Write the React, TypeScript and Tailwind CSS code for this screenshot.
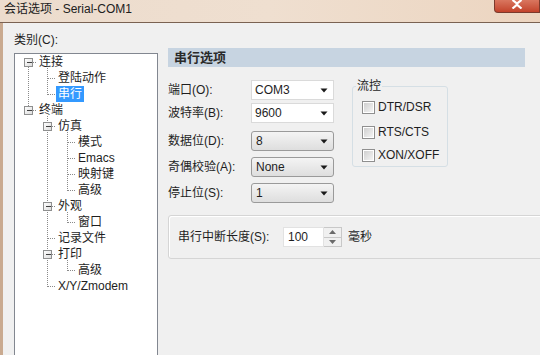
import React from "react";

type Row = { label: string; level: number; box?: boolean; selected?: boolean };

const rows: Row[] = [
  { label: "连接", level: 0, box: true },
  { label: "登陆动作", level: 1 },
  { label: "串行", level: 1, selected: true },
  { label: "终端", level: 0, box: true },
  { label: "仿真", level: 1, box: true },
  { label: "模式", level: 2 },
  { label: "Emacs", level: 2 },
  { label: "映射键", level: 2 },
  { label: "高级", level: 2 },
  { label: "外观", level: 1, box: true },
  { label: "窗口", level: 2 },
  { label: "记录文件", level: 1 },
  { label: "打印", level: 1, box: true },
  { label: "高级", level: 2 },
  { label: "X/Y/Zmodem", level: 1 },
];

const cy = (i: number) => 8 + 16 * i + 0.5;
const X0 = 13.5;
const X1 = 32.5;
const X2 = 52.5;

function TreeLines() {
  const dash = { stroke: "#8a8a8a", strokeWidth: 1, strokeDasharray: "1 1" };
  const v = (x: number, y1: number, y2: number, k: string) => (
    <line key={k} x1={x} y1={y1} x2={x} y2={y2} {...dash} />
  );
  const h = (x1: number, x2: number, y: number, k: string) => (
    <line key={k} x1={x1} y1={y} x2={x2} y2={y} {...dash} />
  );
  const lines: React.ReactNode[] = [];
  lines.push(v(X0, cy(0), cy(3), "v0"));
  lines.push(h(X0, 22, cy(0), "h0"));
  lines.push(h(X0, 22, cy(3), "h3"));
  lines.push(v(X1, cy(0) + 5, cy(2), "v1a"));
  lines.push(h(X1, 41, cy(1), "h1"));
  lines.push(h(X1, 41, cy(2), "h2"));
  lines.push(v(X1, cy(3) + 5, cy(14), "v1b"));
  [4, 9, 11, 12, 14].forEach((r) => lines.push(h(X1, 41, cy(r), "hl" + r)));
  lines.push(v(X2, cy(4) + 5, cy(8), "v2a"));
  lines.push(v(X2, cy(9) + 5, cy(10), "v2b"));
  lines.push(v(X2, cy(12) + 5, cy(13), "v2c"));
  [5, 6, 7, 8, 10, 13].forEach((r) => lines.push(h(X2, 61, cy(r), "h2l" + r)));
  const boxes: React.ReactNode[] = [];
  rows.forEach((r, i) => {
    if (!r.box) return;
    const x = r.level === 0 ? X0 : X1;
    const y = cy(i);
    boxes.push(
      <g key={"b" + i}>
        <rect x={x - 4} y={y - 4} width={8} height={8} fill="url(#boxg)" stroke="#8e8f8f" />
        <line x1={x - 2} y1={y} x2={x + 3} y2={y} stroke="#404040" />
      </g>
    );
  });
  return (
    <svg className="absolute left-0 top-0" width="143" height="300" shapeRendering="crispEdges">
      <defs>
        <linearGradient id="boxg" x1="0" y1="0" x2="1" y2="1">
          <stop offset="0" stopColor="#ffffff" />
          <stop offset="1" stopColor="#dcdcdc" />
        </linearGradient>
      </defs>
      {lines}
      {boxes}
    </svg>
  );
}

function Arrow() {
  return (
    <svg width="8" height="5" viewBox="0 0 8 5">
      <path d="M0.5 0.5 L7.5 0.5 L4 4.5 Z" fill="#1a1a1a" />
    </svg>
  );
}

function FlatCombo({ value }: { value: string }) {
  return (
    <div className="flex h-[20px] w-[83px] items-center justify-between border border-[#dadada] bg-white pl-[32px] pr-[5px]">
      <span className="-ml-[29px]">{value}</span>
      <Arrow />
    </div>
  );
}

function BtnCombo({ value }: { value: string }) {
  return (
    <div className="flex h-[20px] w-[83px] items-center justify-between rounded-[3px] border border-[#9a9a9a] bg-gradient-to-b from-[#f4f4f4] to-[#dedede] pl-[4px] pr-[5px]">
      <span>{value}</span>
      <Arrow />
    </div>
  );
}

function Check({ label }: { label: string }) {
  return (
    <div className="flex items-center gap-[3px]">
      <div className="flex h-[13px] w-[13px] items-center justify-center border border-[#8f8f8f] bg-white">
        <div className="h-[9px] w-[9px] bg-gradient-to-br from-[#d0d0d0] to-[#f4f4f4]" />
      </div>
      <span>{label}</span>
    </div>
  );
}

export default function App() {
  return (
    <div className="relative h-[355px] w-[540px] overflow-hidden bg-[#f0f0f0] font-['Liberation_Sans','Noto_Sans_CJK_SC',sans-serif] text-[12px] leading-[16px] text-[#1e1e1e]">
      {/* title bar */}
      <div className="flex h-[23px] items-start justify-between border-b border-[#7a6252] bg-gradient-to-r from-[#ecdccd] via-[#efdfd0] to-[#ecd5c0]">
        <div className="pl-[4px] pt-[1px] text-[12px] leading-[16px] text-[#202020]">会话选项 - Serial-COM1</div>
        <div className="flex h-[13px] w-[46px] items-start justify-center rounded-bl-[4px] border border-t-0 border-[#7b3a2c] bg-gradient-to-b from-[#d9765f] to-[#c2422a]">
          <svg width="12" height="9" viewBox="0 0 12 9">
            <path d="M1.5 0 L6 3.6 L10.5 0 M1.5 8.5 L6 4.6 L10.5 8.5" stroke="#ffffff" strokeWidth="2.2" fill="none" />
          </svg>
        </div>
      </div>

      {/* body */}
      <div className="flex h-[332px] border-l-[3px] border-[#c9aa90]">
        {/* left */}
        <div className="flex w-[155px] flex-col pl-[11px] pt-[9px]">
          <div className="h-[16px]">类别(C):</div>
          <div className="relative -mb-[6px] mt-[5px] w-[144px] flex-1 border border-[#828790] bg-white">
            <TreeLines />
            <div className="relative">
              {rows.map((r, i) => (
                <div key={i} className="flex h-[16px] items-center">
                  <span
                    className={
                      (r.level === 0 ? "ml-[22px] " : r.level === 1 ? "ml-[41px] " : "ml-[61px] ") +
                      "px-[2px] leading-[16px] " +
                      (r.selected ? "bg-[#3399ff] text-white" : "")
                    }
                  >
                    {r.label}
                  </span>
                </div>
              ))}
            </div>
          </div>
        </div>

        {/* right */}
        <div className="ml-[10px] flex flex-1 flex-col pt-[25px]">
          <div className="h-[19px] w-[357px] bg-[#c7d4e1] pl-[6px] text-[13px] font-bold leading-[19px] text-[#2a2a2a]">
            串行选项
          </div>

          <div className="mt-[13px] flex">
            <div className="flex flex-col">
              <div className="flex h-[20px] items-center">
                <span className="w-[83px]">端口(O):</span>
                <FlatCombo value="COM3" />
              </div>
              <div className="mt-[3px] flex h-[20px] items-center">
                <span className="w-[83px]">波特率(B):</span>
                <FlatCombo value="9600" />
              </div>
              <div className="mt-[8px] flex h-[20px] items-center">
                <span className="w-[83px]">数据位(D):</span>
                <BtnCombo value="8" />
              </div>
              <div className="mt-[6px] flex h-[20px] items-center">
                <span className="w-[83px]">奇偶校验(A):</span>
                <BtnCombo value="None" />
              </div>
              <div className="mt-[6px] flex h-[20px] items-center">
                <span className="w-[83px]">停止位(S):</span>
                <BtnCombo value="1" />
              </div>
            </div>

            <div className="ml-[18px] mt-[6px] flex h-[81px] w-[96px] flex-col rounded-[3px] border border-[#d5dfe5] pl-[9px]">
              <span className="-ml-[6px] -mt-[9px] w-fit bg-[#f0f0f0] px-[1px] leading-[16px]">流控</span>
              <div className="mt-[5px] flex flex-col gap-[10px]">
                <Check label="DTR/DSR" />
                <div className="-mt-[1px] flex flex-col gap-[7px]">
                  <Check label="RTS/CTS" />
                  <Check label="XON/XOFF" />
                </div>
              </div>
            </div>
          </div>

          <div className="mt-[12px] flex h-[44px] w-[400px] items-center rounded-[3px] border border-[#d5d5d5] pl-[9px] shadow-[inset_1px_1px_0_#ffffff]">
            <span className="w-[105px]">串行中断长度(S):</span>
            <div className="flex h-[20px] w-[41px] items-center border border-[#e2e2e2] bg-white pl-[4px]">100</div>
            <div className="flex h-[20px] w-[18px] flex-col border border-l-0 border-[#c8c8c8] bg-[#f0f0f0]">
              <div className="flex flex-1 items-center justify-center border-b border-[#c8c8c8]">
                <svg width="7" height="4" viewBox="0 0 7 4">
                  <path d="M0 4 L3.5 0 L7 4 Z" fill="#6a6a6a" />
                </svg>
              </div>
              <div className="flex flex-1 items-center justify-center">
                <svg width="7" height="4" viewBox="0 0 7 4">
                  <path d="M0 0 L7 0 L3.5 4 Z" fill="#6a6a6a" />
                </svg>
              </div>
            </div>
            <span className="ml-[6px]">毫秒</span>
          </div>
        </div>
      </div>
    </div>
  );
}
